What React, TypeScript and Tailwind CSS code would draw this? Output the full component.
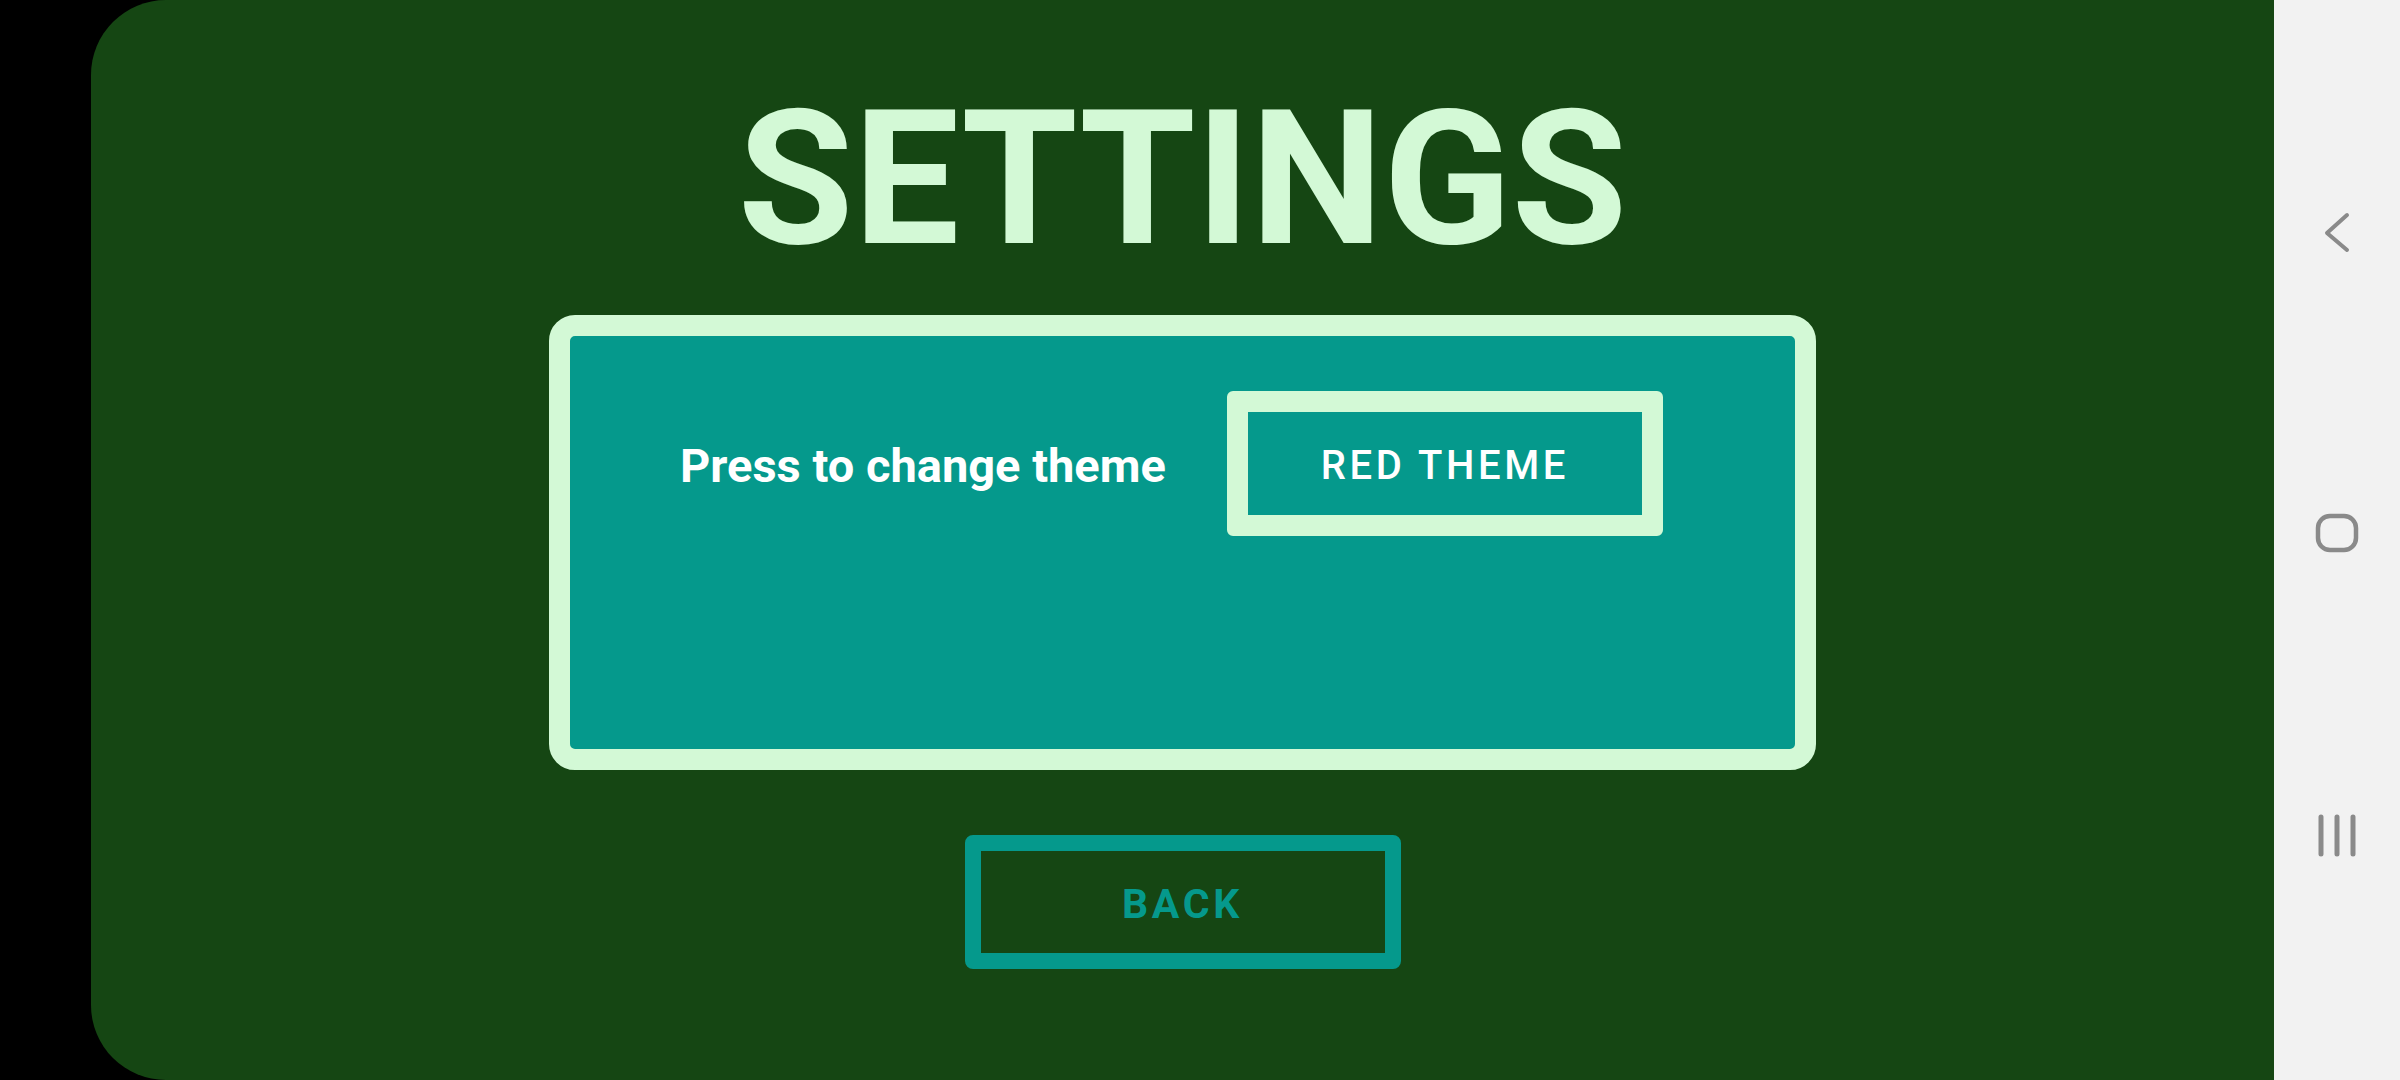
import React from "react";

export default function App() {
  const font = { fontFamily: "Roboto, 'Liberation Sans', sans-serif" };
  return (
    <div className="w-[2400px] h-[1080px] flex bg-black overflow-hidden" style={font}>
      <div className="w-[91px] shrink-0 bg-black" />
      <div className="flex-1 bg-[#154613] rounded-l-[75px] flex flex-col items-center">
        <h1 className="mt-[85px] text-[188px] leading-none font-bold text-[#d3f9d6]">SETTINGS</h1>
        <div className="mt-[42px] w-[1267px] h-[455px] border-[21px] border-[#d3f9d6] rounded-[26px] bg-[#05998c] flex items-start pl-[110px] pt-[55px]">
          <div className="flex items-center gap-[61px]">
            <span className="text-[47px] font-bold text-white leading-tight pt-[6px]">Press to change theme</span>
            <button className="w-[436px] h-[145px] border-[21px] border-[#d3f9d6] rounded-[6px] bg-[#05998c] flex items-center justify-center pt-[5px] text-[40px] font-medium text-white tracking-[0.09em]">
              RED THEME
            </button>
          </div>
        </div>
        <button className="mt-[65px] w-[436px] h-[134px] border-[16px] border-[#05998c] rounded-[8px] flex items-center justify-center pt-[6px] text-[41px] font-bold text-[#05998c] tracking-[0.09em]">
          BACK
        </button>
      </div>
      <div className="w-[126px] shrink-0 bg-[#f2f2f2] flex flex-col items-center">
        <svg className="mt-[212px]" width="40" height="42" viewBox="0 0 40 42">
          <path d="M30 3 L10 21 L30 38" fill="none" stroke="#8a8a8a" strokeWidth="4" strokeLinecap="round" strokeLinejoin="round" />
        </svg>
        <svg className="mt-[259px]" width="46" height="42" viewBox="0 0 46 42">
          <rect x="4" y="3" width="38" height="34" rx="12" fill="none" stroke="#8a8a8a" strokeWidth="4.5" />
        </svg>
        <svg className="mt-[259px]" width="46" height="44" viewBox="0 0 46 44">
          <path d="M7 3 V40 M23 3 V40 M39 3 V40" fill="none" stroke="#8a8a8a" strokeWidth="5" strokeLinecap="round" />
        </svg>
      </div>
    </div>
  );
}
